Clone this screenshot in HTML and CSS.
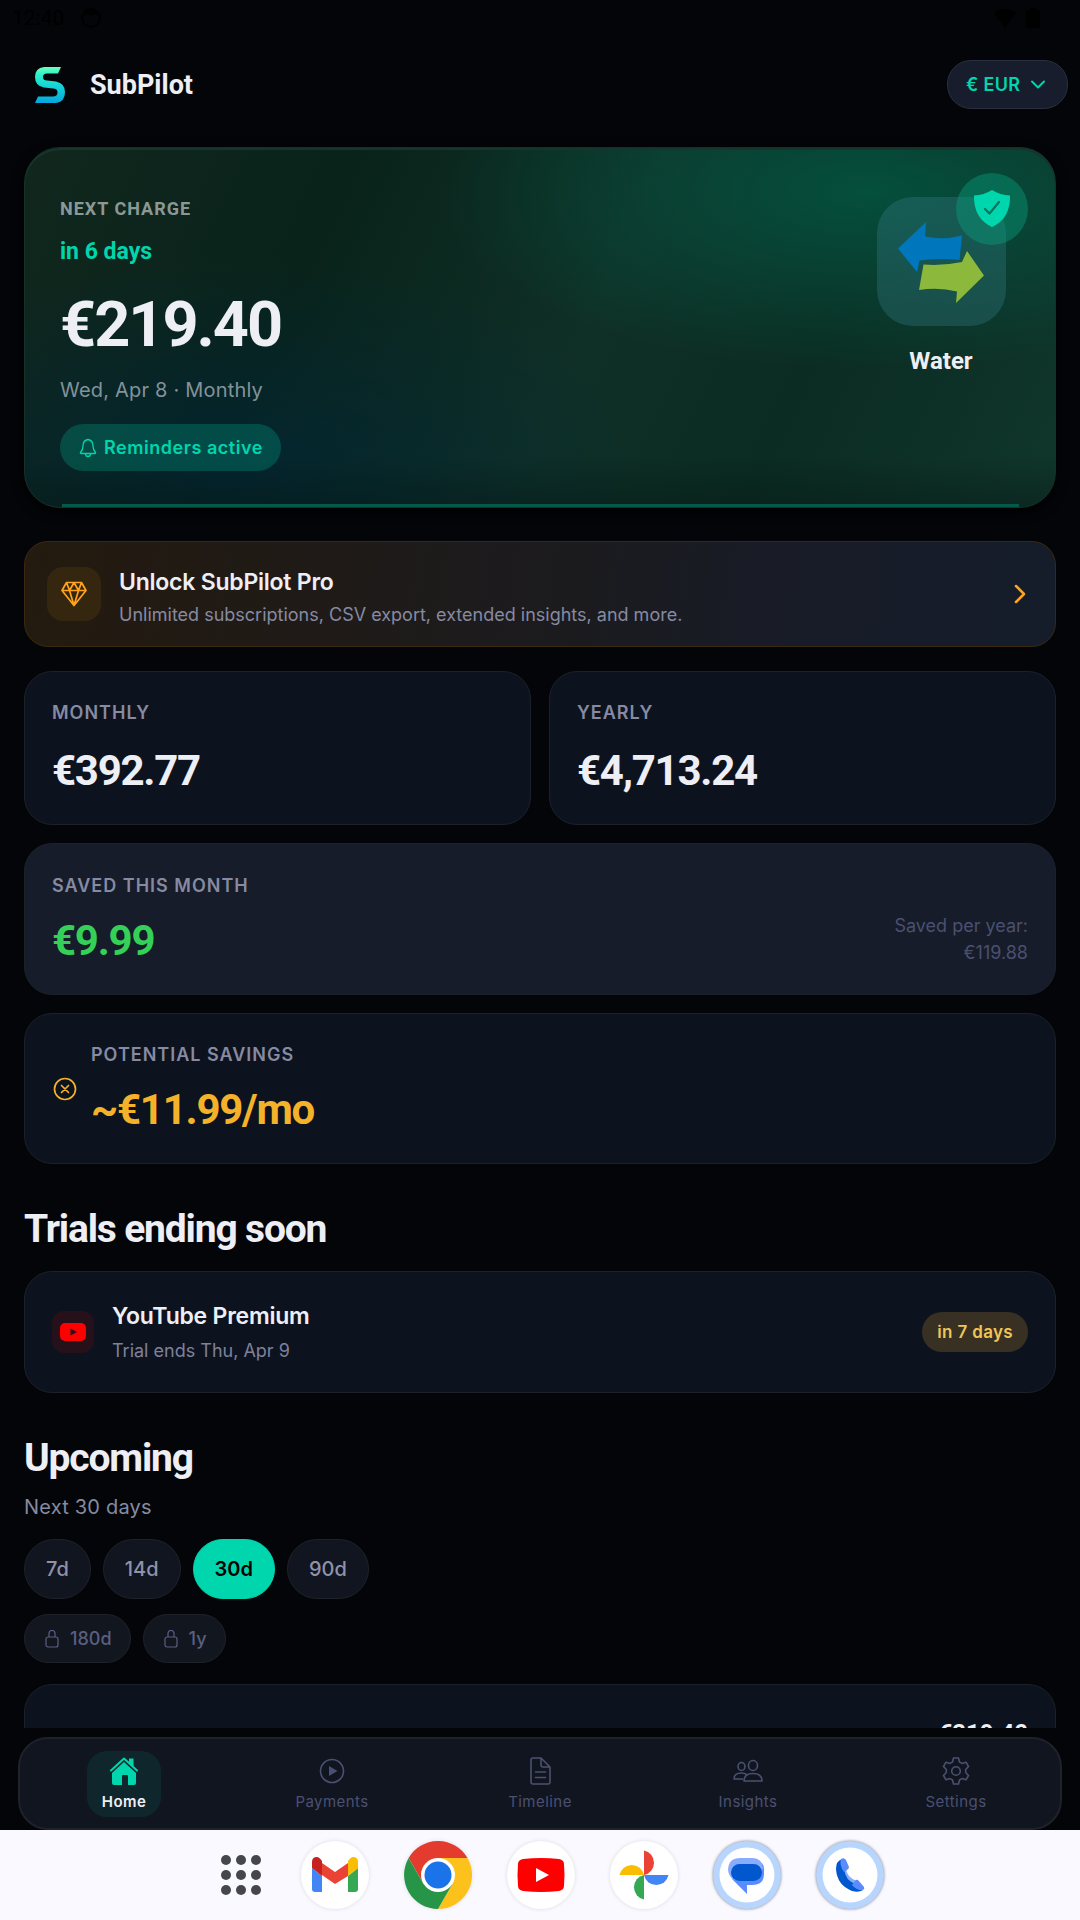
FILE: index.html
```html
<!DOCTYPE html>
<html lang="en">

<head>
  <meta charset="UTF-8">
  <meta name="viewport" content="width=device-width, initial-scale=1">
  <title>SubPilot</title>
  <link rel="stylesheet" href="styles.css">
</head>

<body>
  <div class="status-bar">
    <span>12:40</span>
    <svg width="22" height="22" viewBox="0 0 22 22"><circle cx="11" cy="11" r="9" fill="none" stroke="#000" stroke-width="2"/><path d="M5 5a9 9 0 0 1 12 0v4l-3-2-3 2-3-2-3 2z"/></svg>
    <svg class="status-wifi" width="22" height="20" viewBox="0 0 22 20"><path d="M11 20 0 5a17 17 0 0 1 22 0z"/></svg>
    <svg width="14" height="20" viewBox="0 0 14 20"><path d="M4 0h6v2h2a2 2 0 0 1 2 2v14a2 2 0 0 1-2 2H2a2 2 0 0 1-2-2V4a2 2 0 0 1 2-2h2z"/></svg>
  </div>

  <main class="screen">
    <header class="header">
      <svg class="logo" width="52" height="40" viewBox="0 0 52 40">
        <defs>
          <linearGradient id="logoFill" x1="0" y1="0" x2="0" y2="1">
            <stop offset="0" stop-color="#6dffb9"/>
            <stop offset=".22" stop-color="#2aefc9"/>
            <stop offset=".6" stop-color="#10cddb"/>
            <stop offset="1" stop-color="#04a6dc"/>
          </linearGradient>
        </defs>
        <path fill="url(#logoFill)" d="M37 2 34 8.500H23q-4 0-4 3.500t4 3.500l9 1q9 2 9 10.500 0 10-9 11H11l3-6.500h15q4.500 0 4.500-4T29 23.500l-9-1q-9-1.500-9-10.500 0-9 9-10z"/>
      </svg>
      <h1 class="brand">SubPilot</h1>
      <label class="currency">
        <select aria-label="Currency">
          <option>€ EUR</option>
        </select>
        <svg width="16" height="16" viewBox="0 0 16 16"><path d="m2 4.500 6 6 6-6" fill="none" stroke="#00d6ad" stroke-width="2" stroke-linecap="round" stroke-linejoin="round"/></svg>
      </label>
    </header>

    <section class="hero">
      <div class="hero-info">
        <p class="hero-label">NEXT CHARGE</p>
        <p class="hero-when">in 6 days</p>
        <p class="hero-amount">€219.40</p>
        <p class="hero-date">Wed, Apr 8 · Monthly</p>
        <span class="reminder">
          <svg width="18" height="20" viewBox="0 0 18 20" fill="none" stroke="#00d6ad" stroke-width="1.300" stroke-linejoin="round"><path d="M9 1.500c-4 .8-5 3.500-5 6.500 0 3-.8 4.500-2.500 6.500-.3.500 0 1 .5 1h14c.5 0 .8-.5.500-1C14.800 12.500 14 11 14 8c0-3-1-5.700-5-6.500z"/><path d="M6.500 15.500c0 4 5 4 5 0"/></svg>
          Reminders active
        </span>
      </div>
      <div class="hero-service">
        <div class="service-tile">
          <svg width="88" height="88" viewBox="0 0 88 88">
            <path fill="#0077bd" d="M1 30.500 29 4l-1 14.500q18 4 37-1L62.500 42q-18-2-40 .5L20 54z"/>
            <path fill="#8cb93c" d="M26.500 46.500Q46 48 65 44l5-11 17 24.500L59 85l1-11.500Q42 69 22 72z"/>
          </svg>
        </div>
        <p class="service-name">Water</p>
        <span class="shield">
          <svg width="38" height="38" viewBox="0 0 38 38"><path fill="#00d6ad" d="M19 0q8 5 18 5.500.500 23-18 31.500Q.500 28.500 1 5.500 11 5 19 0z"/><path d="m12 19 4.500 4.500L26 12" fill="none" stroke="#08725e" stroke-width="2.200" stroke-linecap="round" stroke-linejoin="round"/></svg>
        </span>
      </div>
    </section>

    <a class="pro" href="#">
      <span class="pro-icon">
        <svg width="26" height="26" viewBox="0 0 26 26" fill="none" stroke="#ffa41c" stroke-width="1.700" stroke-linejoin="round"><path d="M5.500 1.500h15l4.500 8L13 24.500 1 9.500zM1 9.500h24M5.500 1.500l3 8 4.500-8 4.500 8 3-8M8.500 9.500l4.500 15 4.500-15"/></svg>
      </span>
      <span class="pro-text">
        <strong>Unlock SubPilot Pro</strong>
        <span>Unlimited subscriptions, CSV export, extended insights, and more.</span>
      </span>
      <svg width="16" height="22" viewBox="0 0 16 22"><path d="m3 3 8 8-8 8" fill="none" stroke="#ffa41c" stroke-width="2.500" stroke-linecap="round" stroke-linejoin="round"/></svg>
    </a>

    <div class="stats">
      <section class="card">
        <h2 class="label">MONTHLY</h2>
        <p class="value">€392.77</p>
      </section>
      <section class="card">
        <h2 class="label">YEARLY</h2>
        <p class="value">€4,713.24</p>
      </section>
    </div>

    <section class="card card-saved">
      <div>
        <h2 class="label">SAVED THIS MONTH</h2>
        <p class="value green">€9.99</p>
      </div>
      <p class="per-year">Saved per year:<br>€119.88</p>
    </section>

    <section class="card card-potential">
      <svg width="26" height="26" viewBox="0 0 26 26" fill="none" stroke="#f3b229" stroke-width="1.700" stroke-linecap="round"><circle cx="13" cy="13" r="10.500"/><path d="m9.500 9.500 7 7m0-7-7 7"/></svg>
      <div>
        <h2 class="label">POTENTIAL SAVINGS</h2>
        <p class="value amber">~€11.99/mo</p>
      </div>
    </section>

    <h2 class="heading">Trials ending soon</h2>
    <section class="card card-trial">
      <span class="trial-icon">
        <svg width="26" height="20" viewBox="0 0 26 20"><rect y="1" width="26" height="18" rx="5" fill="#f00"/><path fill="#26101a" d="m10.500 6.500 6.500 3.500-6.500 3.500z"/></svg>
      </span>
      <div class="trial-text">
        <h3>YouTube Premium</h3>
        <p>Trial ends Thu, Apr 9</p>
      </div>
      <span class="badge">in 7 days</span>
    </section>

    <h2 class="heading">Upcoming</h2>
    <p class="range">Next 30 days</p>
    <div class="chips">
      <button class="chip">7d</button>
      <button class="chip">14d</button>
      <button class="chip active">30d</button>
      <button class="chip">90d</button>
    </div>
    <div class="chips">
      <button class="chip locked">
        <svg width="14" height="18" viewBox="0 0 14 18" fill="none" stroke="#5a5f82" stroke-width="1.200"><rect x="1" y="7" width="12" height="10" rx="2"/><path d="M4 7V3.500a3 3 0 0 1 6 0V7"/></svg>
        180d
      </button>
      <button class="chip locked">
        <svg width="14" height="18" viewBox="0 0 14 18" fill="none" stroke="#5a5f82" stroke-width="1.200"><rect x="1" y="7" width="12" height="10" rx="2"/><path d="M4 7V3.500a3 3 0 0 1 6 0V7"/></svg>
        1y
      </button>
    </div>

    <section class="card card-charge">
      <p>€219.40</p>
    </section>
  </main>

  <nav class="tabs">
    <a class="tab active" href="#">
      <svg width="30" height="28" viewBox="0 0 30 28"><path fill="none" stroke="#00d6ad" stroke-width="2" stroke-linecap="round" stroke-linejoin="round" d="M2 13.500 15 1.500l13 12"/><path fill="#00d6ad" d="M20 1.500h4.500V10L20 6zM15 5l12 11v10q0 2-2 2h-6v-9q0-1-1-1h-4q-1 0-1 1v9H5q-2 0-2-2V16z"/></svg>
      Home
    </a>
    <a class="tab" href="#">
      <svg width="30" height="28" viewBox="0 0 30 28"><circle cx="15" cy="14" r="11.500" fill="none" stroke="#4b5070" stroke-width="1.600"/><path fill="#4b5070" d="m12 9 8.500 5-8.500 5z"/></svg>
      Payments
    </a>
    <a class="tab" href="#">
      <svg width="30" height="28" viewBox="0 0 30 28" fill="none" stroke="#4b5070" stroke-width="1.600" stroke-linejoin="round" stroke-linecap="round"><path d="M8 1h8l9 9v15q0 2-2 2H8q-2 0-2-2V3q0-2 2-2zM16 1v7q0 2 2 2h7M10.500 15h10M10.500 20.500h10"/></svg>
      Timeline
    </a>
    <a class="tab" href="#">
      <svg width="30" height="28" viewBox="0 0 30 28" fill="none" stroke="#4b5070" stroke-width="1.600" stroke-linejoin="round"><ellipse cx="20" cy="8.500" rx="4.500" ry="5"/><ellipse cx="8.500" cy="9.500" rx="3.500" ry="4"/><path d="M11 24q0-7.500 9-7.500t9 7.500zM10 22H1q0-6 7.500-6 3 0 5 1.500"/></svg>
      Insights
    </a>
    <a class="tab" href="#">
      <svg width="30" height="28" viewBox="0 0 30 28" fill="none" stroke="#4b5070" stroke-width="1.600" stroke-linejoin="round"><path d="M12.500 1h5l1 4 2.500 1.400 4-1.200 2.500 4.300-2.800 3v3l2.800 3-2.500 4.300-4-1.200-2.500 1.400-1 4h-5l-1-4L9 21.600l-4 1.200-2.500-4.300 2.800-3v-3l-2.800-3L5 5.200l4 1.200L11.500 5z"/><circle cx="15" cy="14" r="4.300"/></svg>
      Settings
    </a>
  </nav>

  <footer class="dock">
    <button class="all-apps" aria-label="All apps">
      <svg width="50" height="50" viewBox="0 0 50 50" fill="#46464f"><circle cx="10" cy="10" r="5"/><circle cx="25" cy="10" r="5"/><circle cx="40" cy="10" r="5"/><circle cx="10" cy="25" r="5"/><circle cx="25" cy="25" r="5"/><circle cx="40" cy="25" r="5"/><circle cx="10" cy="40" r="5"/><circle cx="25" cy="40" r="5"/><circle cx="40" cy="40" r="5"/></svg>
    </button>
    <button class="app" aria-label="Gmail">
      <svg width="68" height="68" viewBox="0 0 68 68"><path fill="#4285f4" d="M11 27l10 8v16h-7q-3 0-3-3z"/><path fill="#34a853" d="M57 27l-10 8v16h7q3 0 3-3z"/><path fill="#ea4335" d="M21 22 34 31l13-9v13L34 43 21 34z"/><path fill="#c5221f" d="M11 27v-6q0-5 5-5 2 0 5 4v15z"/><path fill="#fbbc04" d="M57 27v-6q0-5-5-5-2 0-5 4v15z"/></svg>
    </button>
    <button class="app" aria-label="Chrome">
      <svg width="68" height="68" viewBox="0 0 68 68"><path fill="#e33b2e" d="M34 17h29.500A34 34 0 0 0 4.600 17l14.700 25.500z"/><path fill="#fcc21b" d="M48.700 42.500 34 68a34 34 0 0 0 29.500-51H34z"/><path fill="#269547" d="M19.300 42.500 4.600 17A34 34 0 0 0 34 68l14.700-25.500z"/><circle cx="34" cy="34" r="17" fill="#fff"/><circle cx="34" cy="34" r="13.500" fill="#1a73e8"/></svg>
    </button>
    <button class="app" aria-label="YouTube">
      <svg width="68" height="68" viewBox="0 0 68 68"><path fill="#f00" d="M16 18q18-2 36 0 5 1 5 5 1 11 0 22 0 4-5 5-18 2-36 0-5-1-5-5-1-11 0-22 0-4 5-5z"/><path fill="#fff" d="m29 27 13 7-13 7z"/></svg>
    </button>
    <button class="app" aria-label="Photos">
      <svg width="68" height="68" viewBox="0 0 68 68"><path fill="#ea4335" d="M34 9.500a12.500 12.500 0 0 1 0 24.500z"/><path fill="#4285f4" d="M58.500 34A12.500 12.500 0 0 1 34 34z"/><path fill="#34a853" d="M34 58.500A12.500 12.500 0 0 1 34 34z"/><path fill="#fbbc04" d="M9.500 34A12.500 12.500 0 0 1 34 34z"/></svg>
    </button>
    <button class="app ringed" aria-label="Messages">
      <svg width="68" height="68" viewBox="0 0 68 68"><circle cx="34" cy="34" r="27.500" fill="#fff"/><path fill="#5a8cff" d="M43 19q8 2 8 9v5q0 11-12 11h-5v9L19 38z"/><path fill="#8aacff" d="M27 17h13q9 0 10 11l-29 11q-6-4-6-11 1-11 12-11z"/><rect x="18" y="23" width="31" height="17" rx="8.500" fill="#0057ce"/></svg>
    </button>
    <button class="app ringed" aria-label="Phone">
      <svg width="68" height="68" viewBox="0 0 68 68"><circle cx="34" cy="34" r="27.500" fill="#fff"/><path fill="#8aacff" d="m25 27 5-1q0 10 11 14l-2 7q-12-4-14-20z"/><path fill="#0057ce" d="M26 18q-6 2-6 10 1 16 16 22 7 2 11-1l-7-6q-11-3-12-16z"/><path fill="#5a8cff" d="M25 18q3-2 5 1l3 7q0 2-2 3l-3 2q-5-7-3-13zM47 49q2-1 1-3l-6-7q-2-1-3 1l-3 4q5 6 11 5z"/></svg>
    </button>
  </footer>
</body>

</html>
```
FILE: styles.css
```css
* {
  box-sizing: border-box;
}

body {
  margin: 0;
  height: 100vh;
  display: flex;
  flex-direction: column;
  overflow: hidden;
  background: #040509;
  color: #eeeef5;
  font-family: Inter, sans-serif;
  font-size: 18px;
}

h1,
h2,
h3,
p {
  margin: 0;
}

a {
  color: inherit;
  text-decoration: none;
}

button,
select {
  font: inherit;
  color: inherit;
  letter-spacing: inherit;
  background: none;
  border: none;
  padding: 0;
}

svg {
  display: block;
  flex: none;
}

/* status bar */
.status-bar {
  flex: none;
  display: flex;
  align-items: center;
  gap: 16px;
  height: 36px;
  padding: 0 40px 0 12px;
  color: #000;
  font-family: Roboto, sans-serif;
  font-size: 21px;
}

.status-wifi {
  margin-left: auto;
}

.status-bar svg:last-child {
  margin-left: -6px;
}

/* scrolling content */
.screen {
  flex: 1;
  min-height: 0;
  overflow: hidden;
  padding: 24px 24px 0;
}

.header {
  display: flex;
  align-items: center;
  gap: 14px;
  margin: 0 -12px 38px 0;
}

.brand {
  font-family: Roboto, sans-serif;
  font-size: 27px;
  font-weight: 700;
  line-height: 32px;
}

.currency {
  display: flex;
  align-items: center;
  gap: 9px;
  height: 49px;
  margin-left: auto;
  padding: 0 21px 0 18px;
  border: 1px solid #2b2f3b;
  border-radius: 24px;
  background: #171d2c;
  color: #00d6ad;
  font-weight: 600;
  letter-spacing: 0.02em;
}

.currency select {
  appearance: none;
}

/* next charge */
.hero {
  position: relative;
  display: flex;
  justify-content: space-between;
  height: 361px;
  padding: 49px 27px 0 35px;
  border: 1px solid #16302a;
  border-radius: 36px;
  background:
    linear-gradient(to top, rgba(4, 20, 18, 0.4), transparent 14%),
    radial-gradient(ellipse 42% 50% at 82% 12%, rgba(2, 94, 72, 0.7), transparent),
    radial-gradient(ellipse 40% 60% at 20% 90%, rgba(0, 38, 56, 0.7), transparent),
    linear-gradient(115deg, #11271e, #09231a 28%, #0f3027 54%, #0b2c22 74%, #10362c);
  box-shadow: inset 0 2px 0 #16362c, 0 4px 12px #000;
}

.hero::after {
  content: "";
  position: absolute;
  left: 37px;
  right: 36px;
  bottom: 0;
  height: 3px;
  background: #04594a;
}

.hero-label {
  color: #8b9895;
  font-family: Roboto, sans-serif;
  font-weight: 700;
  line-height: 24px;
  letter-spacing: 1px;
}

.hero-when {
  margin-top: 17px;
  color: #00d6ad;
  font-family: Roboto, sans-serif;
  font-size: 23px;
  font-weight: 700;
  line-height: 28px;
}

.hero-amount {
  margin-top: 21px;
  font-family: Roboto, sans-serif;
  font-size: 63px;
  font-weight: 700;
  line-height: 76px;
  letter-spacing: -2px;
}

.hero-date {
  margin-top: 13px;
  color: #82939a;
  font-size: 20px;
  line-height: 28px;
  letter-spacing: 0.01em;
}

.reminder {
  display: flex;
  align-items: center;
  gap: 7px;
  width: fit-content;
  height: 47px;
  margin-top: 20px;
  padding: 0 18px 0 19px;
  border-radius: 24px;
  background: rgba(0, 214, 173, 0.22);
  color: #00d6ad;
  font-weight: 600;
  letter-spacing: 0.03em;
}

.hero-service {
  width: 174px;
}

.service-tile {
  display: flex;
  align-items: center;
  justify-content: center;
  width: 129px;
  height: 129px;
  margin: 0 auto;
  border-radius: 36px;
  background: rgba(64, 136, 156, 0.28);
}

.service-name {
  margin-top: 21px;
  font-family: Roboto, sans-serif;
  font-size: 24px;
  font-weight: 700;
  line-height: 28px;
  text-align: center;
}

.shield {
  position: absolute;
  top: 25px;
  right: 27px;
  display: flex;
  align-items: center;
  justify-content: center;
  width: 72px;
  height: 72px;
  border-radius: 50%;
  background: rgba(8, 160, 125, 0.42);
}

/* pro banner */
.pro {
  display: flex;
  align-items: center;
  gap: 18px;
  height: 106px;
  margin: 33px 0 24px;
  padding: 0 26px 0 22px;
  border: 1px solid #3b290f;
  border-radius: 24px;
  background: linear-gradient(100deg, #241a0f, #1b1b1f 55%, #181c28 75%, #151c2b);
}

.pro-icon {
  display: flex;
  align-items: center;
  justify-content: center;
  width: 54px;
  height: 54px;
  border-radius: 16px;
  background: #35260f;
}

.pro-text {
  flex: 1;
  padding-top: 6px;
  color: #868aa2;
  line-height: 26px;
}

.pro-text strong {
  display: block;
  margin-bottom: 4px;
  color: #eeeef5;
  font-size: 23px;
  font-weight: 600;
  line-height: 32px;
  letter-spacing: -0.01em;
}

/* cards */
.card {
  margin-bottom: 18px;
  padding: 28px 27px;
  border: 1px solid #1c2129;
  border-radius: 28px;
  background: #0d131e;
}

.stats {
  display: grid;
  grid-template-columns: 1fr 1fr;
  gap: 18px;
}

.stats .card {
  height: 154px;
}

.label {
  color: #868aa2;
  font-size: 18px;
  font-weight: 600;
  line-height: 26px;
  letter-spacing: 1px;
}

.value {
  margin-top: 20px;
  font-family: Roboto, sans-serif;
  font-size: 42px;
  font-weight: 700;
  line-height: 50px;
  letter-spacing: -0.03em;
}

.card-saved,
.card-potential {
  display: flex;
  height: 152px;
}

.card-saved {
  justify-content: space-between;
  align-items: flex-end;
  background: #161c29;
}

.card-potential {
  align-items: center;
  gap: 13px;
  height: 151px;
}

.card-saved .value,
.card-potential .value {
  margin-top: 17px;
}

.green {
  color: #34d058;
}

.amber {
  color: #f3b229;
}

.per-year {
  color: #4b5070;
  line-height: 27px;
  text-align: right;
}

.heading {
  margin: 42px 0 19px;
  font-family: Roboto, sans-serif;
  font-size: 39px;
  font-weight: 700;
  line-height: 46px;
  letter-spacing: -0.03em;
}

.card-trial {
  display: flex;
  align-items: center;
  gap: 18px;
  height: 122px;
}

.trial-icon {
  display: flex;
  align-items: center;
  justify-content: center;
  width: 42px;
  height: 42px;
  border-radius: 12px;
  background: #26101a;
}

.trial-text {
  flex: 1;
}

.trial-text h3 {
  font-size: 23px;
  font-weight: 600;
  line-height: 32px;
  letter-spacing: -0.01em;
}

.trial-text p {
  margin-top: 6px;
  color: #7d819b;
  line-height: 26px;
}

.badge {
  padding: 0 15px;
  border-radius: 20px;
  background: #373023;
  color: #efc557;
  font-size: 17px;
  font-weight: 600;
  line-height: 40px;
  letter-spacing: 0.02em;
}

/* upcoming */
.card-trial + .heading {
  margin-bottom: 12px;
}

.range {
  margin-bottom: 18px;
  color: #868aa2;
  font-size: 20px;
  line-height: 28px;
  letter-spacing: 0.01em;
}

.chips {
  display: flex;
  gap: 12px;
  margin-bottom: 15px;
}

.chip {
  display: flex;
  align-items: center;
  gap: 11px;
  height: 60px;
  padding: 0 21px;
  border: 1px solid #1f2229;
  border-radius: 30px;
  background: #111520;
  color: #8e92aa;
  font-size: 20px;
  font-weight: 500;
}

.chip.active {
  border-color: #00d6ad;
  background: #00d6ad;
  color: #000;
  font-weight: 600;
}

.chip.locked {
  height: 49px;
  padding: 0 18px 0 20px;
  background: #12161f;
  color: #5a5f82;
  font-size: 18px;
}

.card-charge {
  margin-top: 21px;
  padding-top: 34px;
  text-align: right;
  font-family: Roboto, sans-serif;
  font-size: 24px;
  font-weight: 700;
  line-height: 28px;
}

/* bottom navigation */
.tabs {
  flex: none;
  display: grid;
  grid-template-columns: repeat(5, 1fr);
  align-items: center;
  justify-items: center;
  height: 93px;
  margin: 9px 18px 0;
  border: 2px solid #1f2229;
  border-radius: 30px;
  background: #111520;
}

.tab {
  display: flex;
  flex-direction: column;
  align-items: center;
  gap: 7px;
  height: 66px;
  padding: 6px 15px 0;
  border-radius: 20px;
  color: #4b5070;
  font-size: 15px;
  line-height: 20px;
  letter-spacing: 0.03em;
}

.tab.active {
  background: #0f272c;
  color: #eeeef5;
  font-weight: 600;
}

/* system dock */
.dock {
  flex: none;
  display: flex;
  align-items: center;
  justify-content: center;
  gap: 35px;
  height: 90px;
  padding-left: 20px;
  background: #faf9ff;
}

.dock .app {
  width: 68px;
  height: 68px;
  border-radius: 50%;
  background: #fff;
  box-shadow: 0 0 4px rgba(0, 0, 0, 0.12);
}

.dock .ringed {
  background: #b7d5fd;
  box-shadow: 0 0 3px rgba(0, 0, 0, 0.5);
}
```
